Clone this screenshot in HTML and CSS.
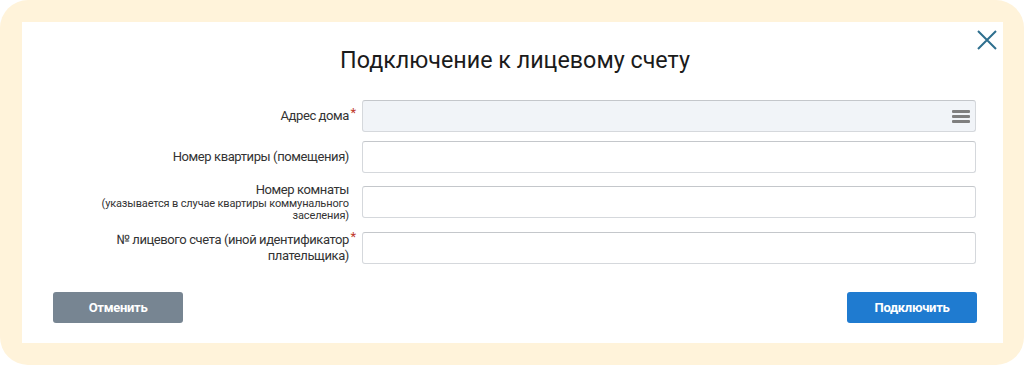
FILE: index.html
```html
<!DOCTYPE html>
<html lang="ru">
<head>
    <meta charset="UTF-8">
    <meta name="viewport" content="width=device-width, initial-scale=1.0">
    <title>Подключение к лицевому счету</title>
    <link rel="stylesheet" href="styles.css">
</head>
<body>
    <div class="frame">
        <div class="modal">
            <button class="close" title="Закрыть">
                <svg width="20" height="20" viewBox="0 0 20 20">
                    <path d="M1 1 L19 19 M19 1 L1 19" stroke="#2e6f8e" stroke-width="2" fill="none"/>
                </svg>
            </button>

            <h1 class="title">Подключение к лицевому счету</h1>

            <!-- Поля формы -->
            <div class="form">
                <div class="row">
                    <div class="label">
                        <span class="text">Адрес дома</span>
                        <span class="req">*</span>
                    </div>
                    <div class="field field-select">
                        <span class="burger"><i></i><i></i><i></i></span>
                    </div>
                </div>
                <div class="row">
                    <div class="label">
                        <span class="text">Номер квартиры (помещения)</span>
                    </div>
                    <input class="field" type="text">
                </div>
                <div class="row">
                    <div class="label">
                        <span class="text">Номер комнаты<small>(указывается в случае квартиры коммунального заселения)</small></span>
                    </div>
                    <input class="field" type="text">
                </div>
                <div class="row row-last">
                    <div class="label">
                        <span class="text">№ лицевого счета (иной идентификатор плательщика)</span>
                        <span class="req">*</span>
                    </div>
                    <input class="field" type="text">
                </div>
            </div>

            <div class="actions">
                <button class="btn btn-cancel">Отменить</button>
                <button class="btn btn-primary">Подключить</button>
            </div>
        </div>
    </div>
</body>
</html>
```

FILE: styles.css
```css
body {
    margin: 0;
    background: #fff;
    font-family: Roboto, "Liberation Sans", Arial, sans-serif;
    color: #222;
}
.frame {
    width: 1024px;
    height: 365px;
    box-sizing: border-box;
    background: #fff3da;
    border-radius: 28px;
    padding: 22px 21px 22px 22px;
}
.modal {
    position: relative;
    height: 321px;
    box-sizing: border-box;
    background: #fff;
    padding: 24px 27px 20px 31px;
}
.close {
    position: absolute;
    top: 8px;
    right: 6px;
    padding: 0;
    border: none;
    background: none;
    cursor: pointer;
    line-height: 0;
}
.title {
    margin: 0 0 26px 1px;
    font-size: 23.3px;
    line-height: 28px;
    font-weight: 400;
    text-align: center;
    color: #1b1b1b;
}
.form {
    display: flex;
    flex-direction: column;
    gap: 9px;
}
.row {
    display: flex;
    align-items: center;
    gap: 6px;
}
.row-last {
    margin-top: 1px;
}
.label {
    position: relative;
    width: 303px;
    display: flex;
    justify-content: flex-end;
    padding-right: 7px;
    box-sizing: border-box;
}
.label .text {
    max-width: 262px;
    text-align: right;
    font-size: 13px;
    line-height: 16px;
    letter-spacing: -0.4px;
    color: #333;
}
.label small {
    display: block;
    font-size: 11px;
    line-height: 12px;
    letter-spacing: -0.15px;
}
.req {
    position: absolute;
    top: -3px;
    right: 0;
    color: #c0392b;
    font-size: 13px;
}
.field {
    flex: 1;
    height: 32px;
    box-sizing: border-box;
    border: 1px solid #d5d8dc;
    border-top-color: #c4c7cb;
    border-radius: 3px;
    background: #fff;
    margin: 0;
    padding: 0 8px;
}
.field-select {
    background: #f1f4f8;
    display: flex;
    align-items: center;
    justify-content: flex-end;
    padding-right: 5px;
}
.burger {
    display: flex;
    flex-direction: column;
    gap: 2px;
    width: 18px;
}
.burger i {
    display: block;
    height: 3px;
    background: #7f7f7f;
    border-radius: 1px;
}
.actions {
    display: flex;
    justify-content: space-between;
    margin-top: 28px;
}
.btn {
    width: 130px;
    height: 31px;
    border: none;
    border-radius: 3px;
    color: #fff;
    font-family: Roboto, "Liberation Sans", Arial, sans-serif;
    font-size: 13px;
    font-weight: 700;
    letter-spacing: -0.3px;
    cursor: pointer;
}
.btn-cancel {
    background: #778592;
}
.btn-primary {
    background: #1f7bd0;
    margin-right: -1px;
}
```
